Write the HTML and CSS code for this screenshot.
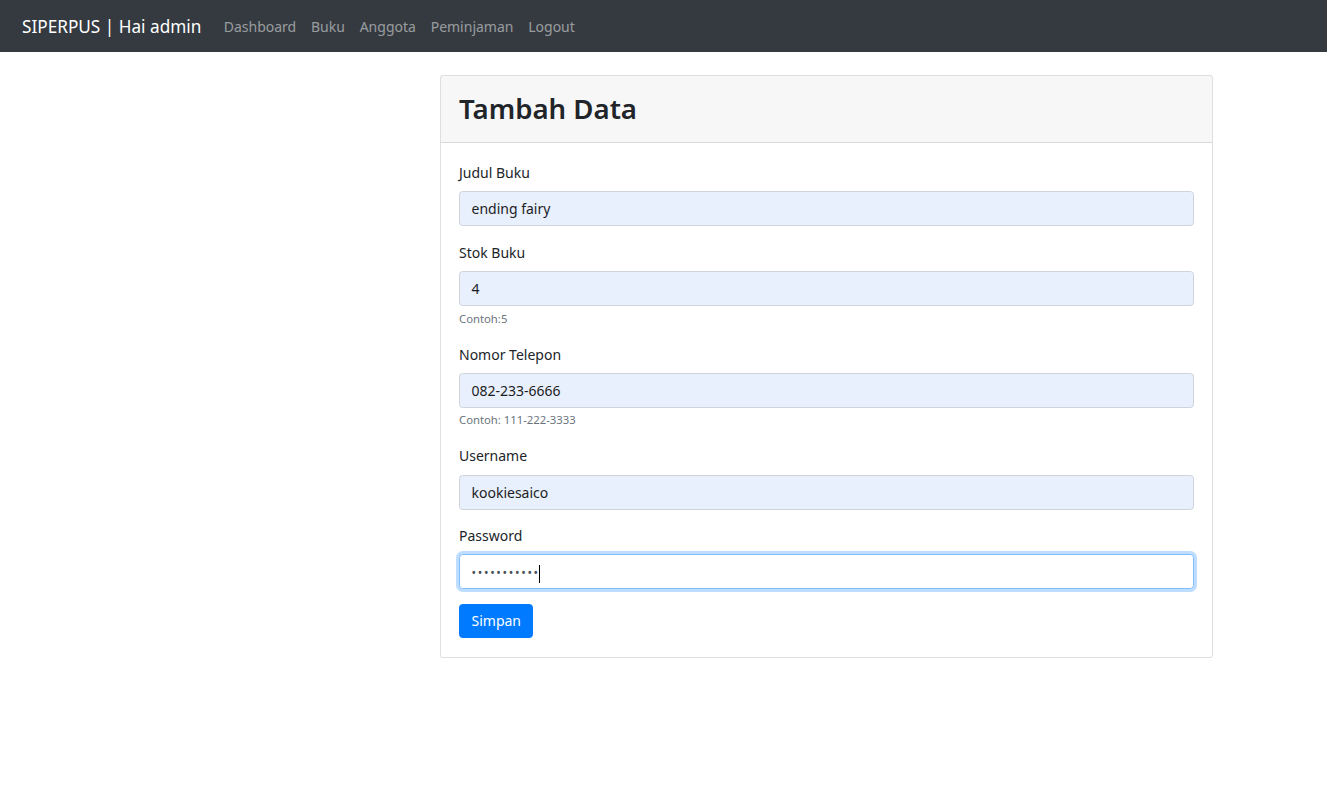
FILE: index.html
```html
<!DOCTYPE html>
<html lang="id">
<head>
<meta charset="utf-8">
<title>SIPERPUS - Tambah Data</title>
<link rel="stylesheet" href="styles.css">
</head>
<body>
<nav class="navbar">
  <a class="brand" href="#">SIPERPUS | Hai admin</a>
  <ul class="nav">
    <li><a class="nav-link" href="#">Dashboard</a></li>
    <li><a class="nav-link" href="#">Buku</a></li>
    <li><a class="nav-link" href="#">Anggota</a></li>
    <li><a class="nav-link" href="#">Peminjaman</a></li>
    <li><a class="nav-link" href="#">Logout</a></li>
  </ul>
</nav>
<main class="main">
  <section class="card">
    <div class="card-header">
      <h1 class="title">Tambah Data</h1>
    </div>
    <form class="card-body">
      <div class="form-group">
        <label class="label">Judul Buku</label>
        <div class="control autofill">ending fairy</div>
      </div>
      <div class="form-group">
        <label class="label">Stok Buku</label>
        <div class="control autofill">4</div>
        <small class="help">Contoh:5</small>
      </div>
      <div class="form-group">
        <label class="label">Nomor Telepon</label>
        <div class="control autofill">082-233-6666</div>
        <small class="help">Contoh: 111-222-3333</small>
      </div>
      <div class="form-group">
        <label class="label">Username</label>
        <div class="control autofill">kookiesaico</div>
      </div>
      <div class="form-group">
        <label class="label">Password</label>
        <div class="control focused"><span class="dots">•••••••••••</span><span class="caret"></span></div>
      </div>
      <button type="button" class="btn">Simpan</button>
    </form>
  </section>
</main>
</body>
</html>
```
FILE: styles.css
```css
html, body {
  margin: 0;
  padding: 0;
}
body {
  font-family: "Segoe UI", "Noto Sans", "Open Sans", sans-serif;
  font-size: 14px;
  line-height: 1.5;
  color: #212529;
  background: #fff;
}
.navbar {
  height: 52px;
  background: #343a40;
  display: flex;
  align-items: center;
  padding: 0 22px;
  box-sizing: border-box;
}
.brand {
  color: #fff;
  font-size: 17.2px;
  text-decoration: none;
  margin-right: 15px;
  line-height: 27px;
}
.nav {
  list-style: none;
  margin: 0;
  padding: 0;
  display: flex;
}
.nav-link {
  display: block;
  padding: 0 7.4px;
  color: rgba(255, 255, 255, 0.5);
  text-decoration: none;
  font-size: 14px;
}
.main {
  padding-top: 23px;
  padding-left: 440px;
}
.card {
  width: 773px;
  box-sizing: border-box;
  border: 1px solid rgba(0, 0, 0, 0.125);
  border-radius: 3.6px;
  background: #fff;
}
.card-header {
  background: rgba(0, 0, 0, 0.03);
  border-bottom: 1px solid rgba(0, 0, 0, 0.125);
  padding: 10px 18px;
  height: 67px;
  box-sizing: border-box;
  display: flex;
  align-items: center;
}
.title {
  margin: 0;
  font-size: 27.6px;
  font-weight: 600;
  line-height: 1.2;
  color: #212529;
}
.card-body {
  padding: 18px 18px 19px;
  margin: 0;
}
.form-group {
  margin-bottom: 14.6px;
}
.label {
  display: block;
  margin-bottom: 7.2px;
  line-height: 23px;
}
.control {
  height: 35px;
  box-sizing: border-box;
  padding: 6px 11.5px;
  border: 1px solid #ced4da;
  border-radius: 3.6px;
  line-height: 21.6px;
  color: #1d1d1d;
  position: relative;
}
.autofill {
  background: #e8f0fe;
}
.focused {
  background: #fff;
  border-color: #80bdff;
  box-shadow: 0 0 0 3px rgba(0, 123, 255, 0.25);
  color: #495057;
}
.dots {
  letter-spacing: 1.7px;
  font-size: 12px;
}
.caret {
  display: inline-block;
  width: 1px;
  height: 18px;
  background: #000;
  vertical-align: middle;
  margin-left: -1px;
}
.help {
  display: block;
  margin-top: 3.6px;
  font-size: 11.3px;
  line-height: 18.4px;
  color: #6c757d;
}
.btn {
  display: inline-block;
  font-family: inherit;
  font-size: 14px;
  line-height: 21.6px;
  padding: 5.4px 11.5px;
  height: 34.5px;
  width: 74px;
  color: #fff;
  background: #007bff;
  border: 1px solid #007bff;
  border-radius: 3.6px;
  cursor: pointer;
}
```
